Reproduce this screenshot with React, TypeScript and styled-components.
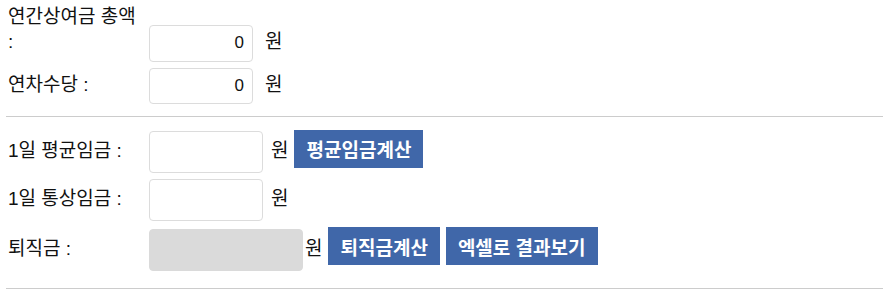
import styled, { createGlobalStyle } from 'styled-components';

const GlobalStyle = createGlobalStyle`
  html, body {
    margin: 0;
    padding: 0;
    background: #fff;
  }
  body {
    font-family: 'Liberation Sans', 'Noto Sans CJK KR', sans-serif;
    font-size: 19px;
    color: #111;
  }
`;

const Page = styled.div`
  padding: 4px 0 0 8px;
  width: 875px;
`;

const Section = styled.div`
  display: flex;
  flex-direction: column;
  gap: 6px;
`;

const Row = styled.div`
  display: flex;
  align-items: last baseline;
`;

const Label = styled.span`
  width: 137px;
  margin-right: 4px;
  flex: none;
  line-height: 25px;
`;

const Field = styled.input<{ $w: number; $h: number }>`
  box-sizing: border-box;
  width: ${(p) => p.$w}px;
  height: ${(p) => p.$h}px;
  margin: 0;
  padding: 0 8px;
  border: 1px solid #dcdcdc;
  border-radius: 4px;
  background: #fff;
  font-family: 'Liberation Sans', 'Noto Sans CJK KR', sans-serif;
  font-size: 17px;
  color: #111;
  text-align: right;
  outline: none;

  &:disabled {
    background: #dadada;
    border-color: #dadada;
  }
`;

const Unit = styled.span<{ $gap: number }>`
  margin-left: ${(p) => p.$gap}px;
`;

const Button = styled.button`
  box-sizing: border-box;
  height: 38px;
  margin: 0 0 0 6px;
  padding: 0 12px;
  border: none;
  background: #4067a9;
  color: #fff;
  font-family: 'Liberation Sans', 'Noto Sans CJK KR', sans-serif;
  font-size: 19px;
  font-weight: bold;
  cursor: pointer;
`;

const Divider = styled.hr`
  margin: 12px 0 13px -2px;
  border: none;
  border-top: 1px solid #cccccc;
`;

const BottomDivider = styled(Divider)`
  margin-top: 17px;
`;

export default function App() {
  return (
    <Page>
      <GlobalStyle />
      <Section>
        <Row>
          <Label>연간상여금 총액 :</Label>
          <Field $w={104} $h={37} defaultValue="0" />
          <Unit $gap={12}>원</Unit>
        </Row>
        <Row>
          <Label>연차수당 :</Label>
          <Field $w={104} $h={36} defaultValue="0" />
          <Unit $gap={12}>원</Unit>
        </Row>
      </Section>
      <Divider />
      <Section>
        <Row>
          <Label>1일 평균임금 :</Label>
          <Field $w={114} $h={42} />
          <Unit $gap={8}>원</Unit>
          <Button>평균임금계산</Button>
        </Row>
        <Row>
          <Label>1일 통상임금 :</Label>
          <Field $w={114} $h={42} />
          <Unit $gap={8}>원</Unit>
        </Row>
        <Row>
          <Label>퇴직금 :</Label>
          <Field $w={154} $h={42} disabled />
          <Unit $gap={2}>원</Unit>
          <Button>퇴직금계산</Button>
          <Button>엑셀로 결과보기</Button>
        </Row>
      </Section>
      <BottomDivider />
    </Page>
  );
}
